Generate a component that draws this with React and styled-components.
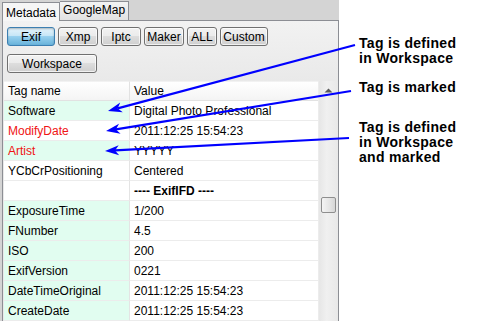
import styled, { createGlobalStyle, css } from "styled-components";

const GlobalStyle = createGlobalStyle`
  html, body {
    margin: 0;
    padding: 0;
    background: #ffffff;
  }
  body {
    font-family: "Liberation Sans", Arial, sans-serif;
  }
`;

const rows = [
  { tag: "Software", value: "Digital Photo Professional", ws: true },
  { tag: "ModifyDate", value: "2011:12:25 15:54:23", marked: true },
  { tag: "Artist", value: "YYYYY", ws: true, marked: true },
  { tag: "YCbCrPositioning", value: "Centered" },
  { tag: "", value: "---- ExifIFD ----", group: true },
  { tag: "ExposureTime", value: "1/200", ws: true },
  { tag: "FNumber", value: "4.5", ws: true },
  { tag: "ISO", value: "200", ws: true },
  { tag: "ExifVersion", value: "0221", ws: true },
  { tag: "DateTimeOriginal", value: "2011:12:25 15:54:23", ws: true },
  { tag: "CreateDate", value: "2011:12:25 15:54:23", ws: true },
];

const buttons = [
  { label: "Exif", w: 48, active: true },
  { label: "Xmp", w: 40 },
  { label: "Iptc", w: 40 },
  { label: "Maker", w: 40 },
  { label: "ALL", w: 30 },
  { label: "Custom", w: 48 },
];

// arrow from the note text to the row, with a notched head
const arrowParts = (x1, y1, x2, y2) => {
  const dx = x2 - x1;
  const dy = y2 - y1;
  const len = Math.hypot(dx, dy);
  const ux = dx / len;
  const uy = dy / len;
  const px = -uy;
  const py = ux;
  const L = 14;
  const W = 5;
  const N = 4;
  const bx = x2 - ux * L;
  const by = y2 - uy * L;
  const nx = x2 - ux * (L - N);
  const ny = y2 - uy * (L - N);
  const pts = [
    [x2, y2],
    [bx + px * W, by + py * W],
    [nx, ny],
    [bx - px * W, by - py * W],
  ]
    .map((p) => p.map((v) => v.toFixed(1)).join(","))
    .join(" ");
  return { line: [x1, y1, nx, ny], pts };
};

const arrows = [
  arrowParts(355, 45, 108, 111),
  arrowParts(351, 91, 106, 131),
  arrowParts(349, 138, 105, 151),
];

const App = () => {
  return (
    <Page>
      <GlobalStyle />
      <Panel>
        <TabBar>
          <Tab $active>Metadata</Tab>
          <Tab>GoogleMap</Tab>
        </TabBar>
        <TabBody>
          <ButtonRow>
            {buttons.map((b) => (
              <ToolButton key={b.label} $w={b.w} $active={b.active}>
                {b.label}
              </ToolButton>
            ))}
          </ButtonRow>
          <ButtonRow>
            <ToolButton $w={90}>Workspace</ToolButton>
          </ButtonRow>
          <TableWrap>
            <Grid>
              <HeadCell>Tag name</HeadCell>
              <HeadCell $value>Value</HeadCell>
              {rows.map((r, i) => (
                <Row key={i}>
                  <TagCell $ws={r.ws} $marked={r.marked}>
                    {r.tag}
                  </TagCell>
                  <ValueCell $group={r.group}>{r.value}</ValueCell>
                </Row>
              ))}
            </Grid>
            <ScrollBar>
              <ScrollArrow>
                <svg width="9" height="5" viewBox="0 0 9 5">
                  <path d="M0.5 4.5 L4.5 0.5 L8.5 4.5 Z" fill="#5a5a5a" />
                </svg>
              </ScrollArrow>
              <Thumb />
            </ScrollBar>
          </TableWrap>
        </TabBody>
      </Panel>
      <Notes>
        <Note>
          Tag is defined
          <br />
          in Workspace
        </Note>
        <Note $gap={14}>Tag is marked</Note>
        <Note $gap={25}>
          Tag is defined
          <br />
          in Workspace
          <br />
          and marked
        </Note>
      </Notes>
      <Arrows width="480" height="321" viewBox="0 0 480 321">
        {arrows.map((a, i) => (
          <g key={i}>
            <line
              x1={a.line[0]}
              y1={a.line[1]}
              x2={a.line[2]}
              y2={a.line[3]}
              stroke="#0000ff"
              strokeWidth="2.2"
            />
            <polygon points={a.pts} fill="#0000ff" />
          </g>
        ))}
      </Arrows>
    </Page>
  );
};

const Page = styled.div`
  position: relative;
  display: flex;
  width: 480px;
  height: 321px;
  overflow: hidden;
  background: #ffffff;
`;

const Panel = styled.div`
  display: flex;
  flex-direction: column;
  width: 339px;
  background: #d4d4d4;
`;

const TabBar = styled.div`
  display: flex;
  height: 20px;
  padding-left: 2px;
`;

const Tab = styled.div`
  position: relative;
  box-sizing: border-box;
  height: 19px;
  margin-top: 1px;
  padding: 1px 3px 0 3px;
  border: 1px solid #8c8e94;
  border-bottom: none;
  border-left: none;
  font-size: 12px;
  color: #000;
  background: linear-gradient(#f3f3f3, #e2e2e2);

  ${(p) =>
    p.$active &&
    css`
      z-index: 1;
      height: 19px;
      margin-top: 2px;
      margin-bottom: -1px;
      padding-top: 3px;
      border-left: 1px solid #8c8e94;
      background: #f6f6f6;
    `}
`;

const TabBody = styled.div`
  flex: 1;
  box-sizing: border-box;
  width: 337px;
  margin-left: 2px;
  padding: 6px 0 0 4px;
  border: 1px solid #8c8e94;
  border-bottom: none;
  background: linear-gradient(#f2f2f2, #e9e9e9 60px);
`;

const ButtonRow = styled.div`
  display: flex;
  gap: 3px;
  margin-bottom: 8px;
`;

const ToolButton = styled.div`
  box-sizing: border-box;
  width: ${(p) => p.$w}px;
  height: 19px;
  display: flex;
  align-items: center;
  justify-content: center;
  border: 1px solid #707070;
  border-radius: 3px;
  font-size: 12px;
  color: #000;
  background: linear-gradient(#f2f2f2 0%, #ebebeb 49%, #dddddd 50%, #cfcfcf 100%);
  box-shadow: inset 0 0 0 1px rgba(255, 255, 255, 0.7);

  ${(p) =>
    p.$active &&
    css`
      border-color: #3c7fb1;
      background: linear-gradient(#e5f4fc 0%, #c4e5f6 49%, #98d1ef 50%, #68b3db 100%);
      box-shadow: inset 0 1px 2px rgba(0, 0, 0, 0.25);
    `}
`;

const TableWrap = styled.div`
  display: flex;
  margin: 0 0 0 -3px;
  height: 241px;
  background: #ffffff;
`;

const Grid = styled.div`
  flex: 1;
  display: grid;
  grid-template-columns: 126px 1fr;
  grid-auto-rows: 20px;
  font-size: 12px;
  overflow: hidden;
`;

const HeadCell = styled.div`
  box-sizing: border-box;
  display: flex;
  align-items: center;
  padding-left: 4px;
  background: linear-gradient(#ffffff, #f4f4f4);
  border-bottom: 1px solid #e2e2e2;
  border-top: 1px solid #f2f2f2;
  border-right: ${(p) => (p.$value ? "none" : "1px solid #e2e2e2")};
  color: #000;
`;

const Row = styled.div`
  display: contents;
`;

const TagCell = styled.div`
  box-sizing: border-box;
  display: flex;
  align-items: center;
  padding-left: 4px;
  border-bottom: 1px solid #ececec;
  border-right: 1px solid #e4e4e4;
  background: ${(p) => (p.$ws ? "#e1fdf0" : "#ffffff")};
  color: ${(p) => (p.$marked ? "#f01414" : "#000000")};
`;

const ValueCell = styled.div`
  box-sizing: border-box;
  display: flex;
  align-items: center;
  padding-left: 4px;
  border-bottom: 1px solid #ececec;
  white-space: nowrap;
  color: #000;
  font-weight: ${(p) => (p.$group ? "bold" : "normal")};
`;

const ScrollBar = styled.div`
  width: 19px;
  display: flex;
  flex-direction: column;
  align-items: center;
  background: linear-gradient(90deg, #e6e6e6, #f0f0f0 40%, #e8e8e8);
  border-left: 1px solid #ececec;
`;

const ScrollArrow = styled.div`
  height: 18px;
  display: flex;
  align-items: center;
  justify-content: center;
`;

const Thumb = styled.div`
  box-sizing: border-box;
  width: 15px;
  height: 16px;
  margin-top: 98px;
  border: 1px solid #8e8e8e;
  border-radius: 2px;
  background: linear-gradient(90deg, #f4f4f4, #e4e4e4 60%, #d6d6d6);
`;

const Notes = styled.div`
  flex: 1;
  display: flex;
  flex-direction: column;
  padding: 36px 0 0 20px;
`;

const Note = styled.div`
  margin-top: ${(p) => p.$gap || 0}px;
  font-size: 14px;
  line-height: 15px;
  font-weight: bold;
  letter-spacing: 0.3px;
  color: #000;
`;

const Arrows = styled.svg`
  position: absolute;
  left: 0;
  top: 0;
  pointer-events: none;
`;

export default App;
